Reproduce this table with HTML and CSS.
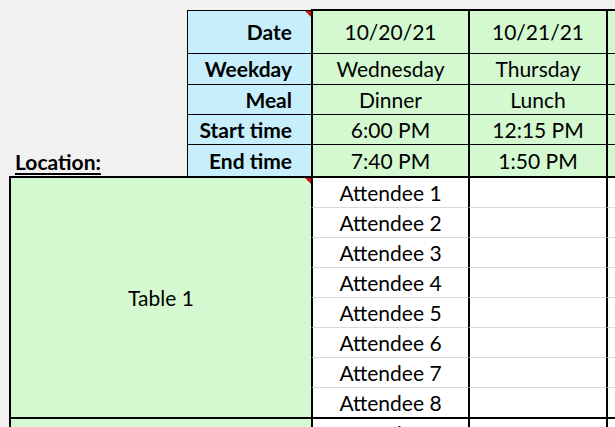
FILE: index.html
```html
<!DOCTYPE html>
<html lang="en">
<head>
<meta charset="utf-8">
<title>Meal schedule</title>
<link rel="stylesheet" href="styles.css">
</head>
<body>
<div class="sheet">
  <div class="header">
    <div class="gutter wide"></div>
    <div class="label first comment">Date</div>
    <div class="hcell first date">10/20/21</div>
    <div class="hcell first date">10/21/21</div>
    <div class="hcell first"></div>

    <div class="gutter wide"></div>
    <div class="label">Weekday</div>
    <div class="hcell">Wednesday</div>
    <div class="hcell">Thursday</div>
    <div class="hcell"></div>

    <div class="gutter wide"></div>
    <div class="label">Meal</div>
    <div class="hcell">Dinner</div>
    <div class="hcell">Lunch</div>
    <div class="hcell"></div>

    <div class="gutter wide"></div>
    <div class="label">Start time</div>
    <div class="hcell">6:00 PM</div>
    <div class="hcell">12:15 PM</div>
    <div class="hcell"></div>

    <div class="gutter"></div>
    <div class="location">Location:</div>
    <div class="label">End time</div>
    <div class="hcell">7:40 PM</div>
    <div class="hcell">1:50 PM</div>
    <div class="hcell"></div>
  </div>

  <div class="block">
    <div class="gutter tall"></div>
    <div class="tname comment">Table 1</div>
    <div class="att first">Attendee 1</div><div class="att first"></div><div class="att first"></div>
    <div class="att">Attendee 2</div><div class="att"></div><div class="att"></div>
    <div class="att">Attendee 3</div><div class="att"></div><div class="att"></div>
    <div class="att">Attendee 4</div><div class="att"></div><div class="att"></div>
    <div class="att">Attendee 5</div><div class="att"></div><div class="att"></div>
    <div class="att">Attendee 6</div><div class="att"></div><div class="att"></div>
    <div class="att">Attendee 7</div><div class="att"></div><div class="att"></div>
    <div class="att">Attendee 8</div><div class="att"></div><div class="att"></div>
  </div>

  <div class="block">
    <div class="gutter tall"></div>
    <div class="tname"></div>
    <div class="att first">Attendee 1</div><div class="att first"></div><div class="att first"></div>
  </div>
</div>
</body>
</html>
```
FILE: styles.css
```css
html, body {
  margin: 0;
  padding: 0;
  overflow: hidden;
  background: #f1f1f1;
}

.sheet {
  width: 615px;
  height: 427px;
  overflow: hidden;
  padding-top: 9px;
  box-sizing: border-box;
  font-family: Lato, "Liberation Sans", sans-serif;
  font-size: 21px;
  line-height: 24px;
  color: #000;
}

.header {
  display: grid;
  grid-template-columns: 9px 178px 124px 157px 138px 1fr;
  grid-template-rows: 44px 31px 30px 30px 32px;
}

.gutter.wide {
  grid-column: span 2;
}

.label,
.hcell,
.att,
.tname,
.location {
  box-sizing: border-box;
  display: flex;
  align-items: center;
  justify-content: center;
  white-space: nowrap;
}

.label {
  background: #c6effb;
  border-left: 1px solid #000;
  border-top: 1px solid #000;
  justify-content: flex-end;
  padding-right: 19px;
  font-weight: 700;
}

.label.first {
  margin-top: 1px;
}

.hcell {
  background: #d4f9d0;
  border-left: 2px solid #000;
  border-top: 1px solid #000;
}

.hcell.first {
  border-top: 2px solid #000;
}

.hcell.date {
  font-size: 21px;
}

.location {
  justify-content: flex-start;
  padding-left: 6px;
  padding-top: 3px;
  font-weight: 700;
  text-decoration: underline;
  text-decoration-thickness: 2px;
  text-underline-offset: 3px;
}

.block {
  display: grid;
  grid-template-columns: 9px 302px 157px 138px 1fr;
  grid-template-rows: 31px repeat(7, 30px);
}

.gutter.tall {
  grid-row: span 8;
}

.tname {
  grid-row: span 8;
  background: #d4f9d0;
  border-left: 2px solid #000;
  border-top: 2px solid #000;
}

.att {
  background: #fff;
  border-left: 2px solid #000;
  border-top: 1px solid #dadada;
}

.att.first {
  border-top: 2px solid #000;
}

.comment {
  position: relative;
}

.comment::after {
  content: "";
  position: absolute;
  top: 0;
  right: 0;
  border-style: solid;
  border-width: 0 6px 6px 0;
  border-color: transparent #d01010 transparent transparent;
}
```
